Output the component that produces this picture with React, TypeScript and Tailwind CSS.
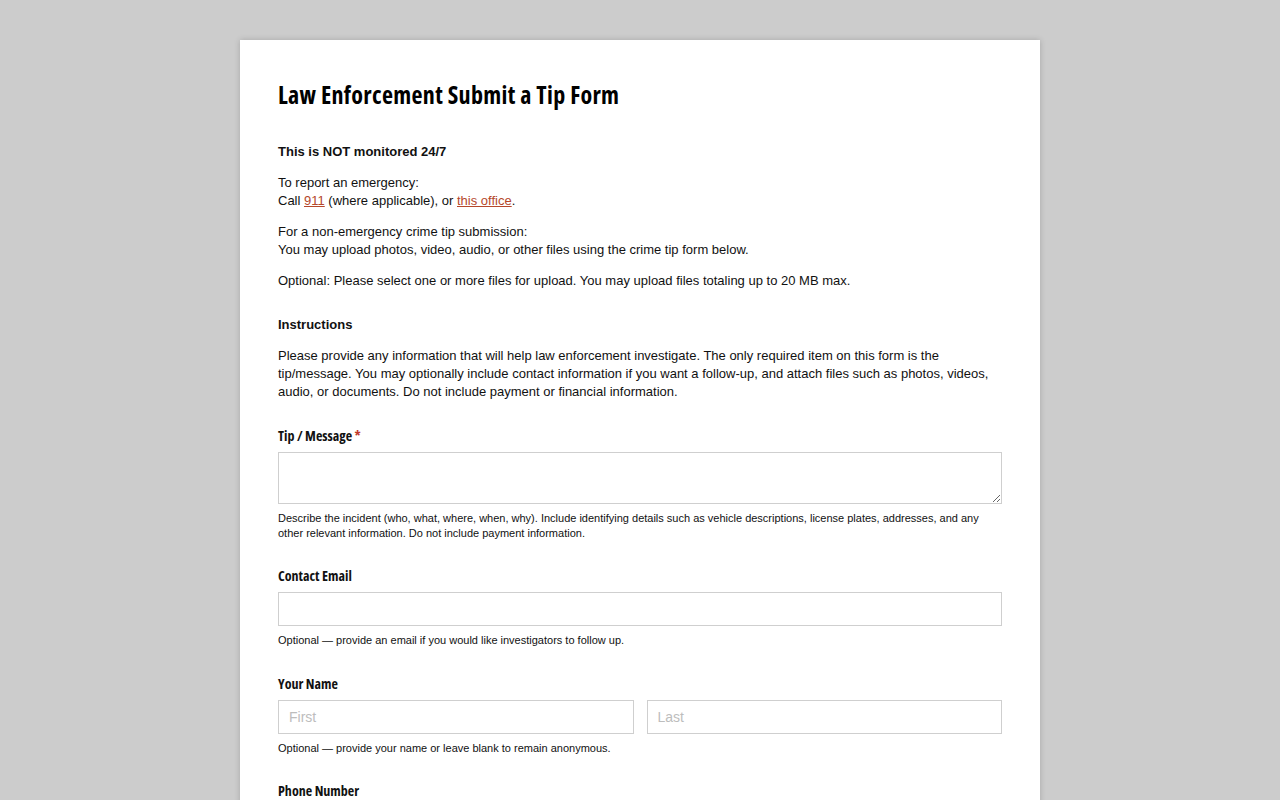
import React from 'react';

const label = "block text-[14px] leading-[20px] font-bold text-[#111] [font-family:'Open_Sans',sans-serif] [font-stretch:75%]";
const help = "mt-[7px] text-[11px] leading-[15px] text-[#111]";
const input = "block w-full h-[34px] border border-[#cfcfcf] bg-white px-[10px] text-[14px] text-[#333] placeholder:text-[#bdbdbd] outline-none [font-family:'Liberation_Sans',Arial,sans-serif]";

const Field: React.FC<{ title: string; required?: boolean; hint: string; wide?: boolean; children: React.ReactNode }> = ({ title, required, hint, wide, children }) => (
  <div className={wide ? 'mt-[26px]' : 'mt-[25px]'}>
    <label className={label}>
      {title}
      {required && <span className="text-[#c0392b]"> *</span>}
    </label>
    <div className="mt-[6px]">{children}</div>
    <p className={help}>{hint}</p>
  </div>
);

export default function App() {
  return (
    <div className="min-h-screen bg-[#cccccc] pt-[40px] [font-family:'Liberation_Sans',Arial,sans-serif]">
      <div className="mx-auto w-[800px] bg-white px-[38px] pt-[40px] pb-[60px] shadow-[0_0_6px_rgba(0,0,0,0.18)]">
        <h1 className="text-[24px] leading-[29px] font-bold tracking-[0.33px] text-black [font-family:'Open_Sans',sans-serif] [font-stretch:75%]">
          Law Enforcement Submit a Tip Form
        </h1>

        <div className="text-[13px] leading-[18px] text-[#111]">
          <p className="mt-[34px] font-bold">This is NOT monitored 24/7</p>
          <p className="mt-[13px]">
            To report an emergency:
            <br />
            Call <a href="#" className="text-[#b5472b] underline">911</a> (where applicable), or{' '}
            <a href="#" className="text-[#b5472b] underline">this office</a>.
          </p>
          <p className="mt-[13px]">
            For a non-emergency crime tip submission:
            <br />
            You may upload photos, video, audio, or other files using the crime tip form below.
          </p>
          <p className="mt-[13px]">
            Optional: Please select one or more files for upload. You may upload files totaling up to 20 MB max.
          </p>
          <h2 className="mt-[26px] text-[13px] font-bold">Instructions</h2>
          <p className="mt-[13px]">
            Please provide any information that will help law enforcement investigate. The only required item on this form is the
            tip/message. You may optionally include contact information if you want a follow-up, and attach files such as photos, videos,
            audio, or documents. Do not include payment or financial information.
          </p>
        </div>

        <Field
          title="Tip / Message"
          required
          hint="Describe the incident (who, what, where, when, why). Include identifying details such as vehicle descriptions, license plates, addresses, and any other relevant information. Do not include payment information."
        >
          <textarea className="block w-full h-[52px] border border-[#cfcfcf] bg-white px-[10px] py-[6px] text-[14px] outline-none resize-y" />
        </Field>

        <Field title="Contact Email" hint="Optional — provide an email if you would like investigators to follow up.">
          <input type="email" className={input} />
        </Field>

        <Field wide title="Your Name" hint="Optional — provide your name or leave blank to remain anonymous.">
          <div className="grid grid-cols-2 gap-[13px]">
            <input className={input} placeholder="First" />
            <input className={input} placeholder="Last" />
          </div>
        </Field>

        <Field title="Phone Number" hint="Optional — provide a phone number if you would like a call back.">
          <input type="tel" className={input} />
        </Field>
      </div>
    </div>
  );
}
